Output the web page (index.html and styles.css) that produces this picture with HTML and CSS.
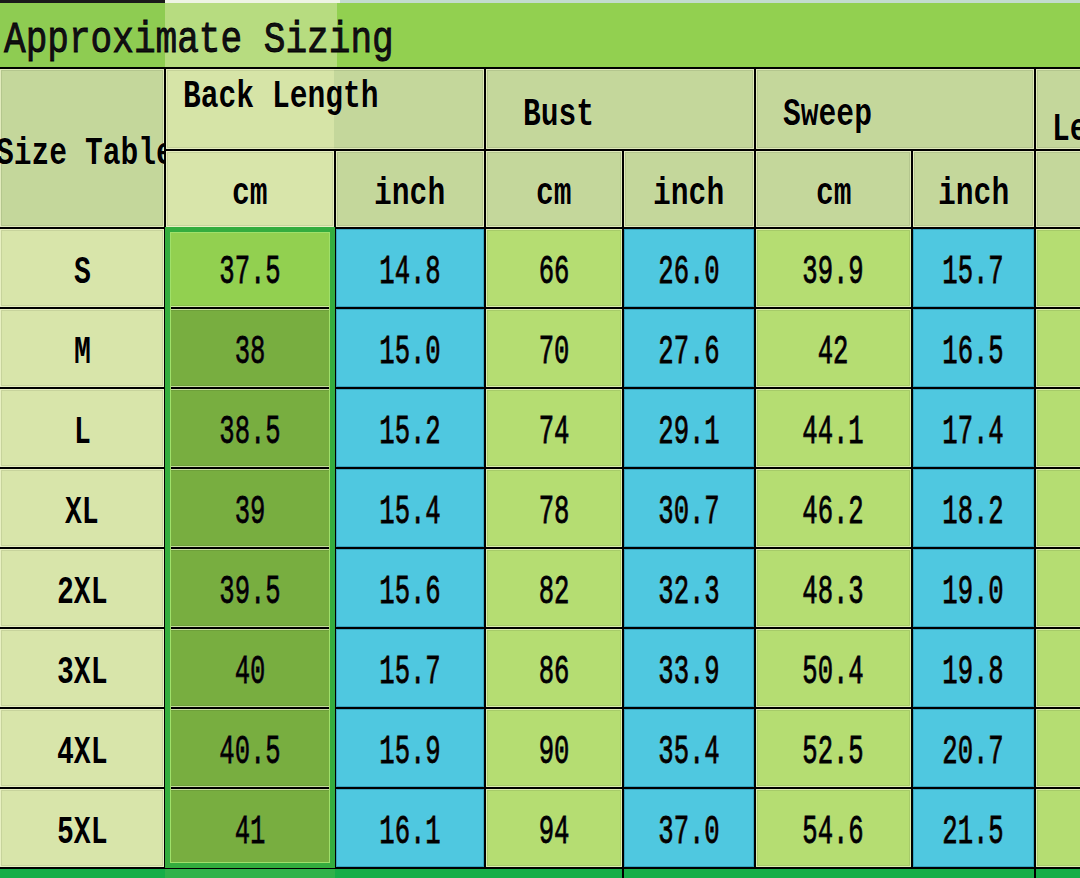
FILE: index.html
```html
<!DOCTYPE html>
<html>
<head>
<meta charset="utf-8">
<link rel="stylesheet" href="styles.css">
</head>
<body>
<div class="page">
  <div class="topstrip"></div>
  <div class="titlebar"><span class="t title">Approximate Sizing</span></div>
  <div class="sheet">
    <div class="c hd sizetable"><span class="t h left">Size Table</span></div>
    <div class="c hd grp backlen"><span class="t h left">Back Length</span></div>
    <div class="c hd grp bust"><span class="t h left">Bust</span></div>
    <div class="c hd grp sweep"><span class="t h left">Sweep</span></div>
    <div class="c hd le"><span class="t h left">Le</span></div>

    <div class="c lt"><span class="t h">cm</span></div>
    <div class="c hd"><span class="t h">inch</span></div>
    <div class="c hd"><span class="t h">cm</span></div>
    <div class="c hd"><span class="t h">inch</span></div>
    <div class="c hd"><span class="t h">cm</span></div>
    <div class="c hd"><span class="t h">inch</span></div>
    <div class="c hd"></div>

    <div class="c sz"><span class="t s">S</span></div>
    <div class="c ds"><span class="t n">37.5</span></div>
    <div class="c b"><span class="t n">14.8</span></div>
    <div class="c g"><span class="t n">66</span></div>
    <div class="c b"><span class="t n">26.0</span></div>
    <div class="c g"><span class="t n">39.9</span></div>
    <div class="c b"><span class="t n">15.7</span></div>
    <div class="c g"></div>

    <div class="c sz"><span class="t s">M</span></div>
    <div class="c dk"><span class="t n">38</span></div>
    <div class="c b"><span class="t n">15.0</span></div>
    <div class="c g"><span class="t n">70</span></div>
    <div class="c b"><span class="t n">27.6</span></div>
    <div class="c g"><span class="t n">42</span></div>
    <div class="c b"><span class="t n">16.5</span></div>
    <div class="c g"></div>

    <div class="c sz"><span class="t s">L</span></div>
    <div class="c dk"><span class="t n">38.5</span></div>
    <div class="c b"><span class="t n">15.2</span></div>
    <div class="c g"><span class="t n">74</span></div>
    <div class="c b"><span class="t n">29.1</span></div>
    <div class="c g"><span class="t n">44.1</span></div>
    <div class="c b"><span class="t n">17.4</span></div>
    <div class="c g"></div>

    <div class="c sz"><span class="t s">XL</span></div>
    <div class="c dk"><span class="t n">39</span></div>
    <div class="c b"><span class="t n">15.4</span></div>
    <div class="c g"><span class="t n">78</span></div>
    <div class="c b"><span class="t n">30.7</span></div>
    <div class="c g"><span class="t n">46.2</span></div>
    <div class="c b"><span class="t n">18.2</span></div>
    <div class="c g"></div>

    <div class="c sz"><span class="t s">2XL</span></div>
    <div class="c dk"><span class="t n">39.5</span></div>
    <div class="c b"><span class="t n">15.6</span></div>
    <div class="c g"><span class="t n">82</span></div>
    <div class="c b"><span class="t n">32.3</span></div>
    <div class="c g"><span class="t n">48.3</span></div>
    <div class="c b"><span class="t n">19.0</span></div>
    <div class="c g"></div>

    <div class="c sz"><span class="t s">3XL</span></div>
    <div class="c dk"><span class="t n">40</span></div>
    <div class="c b"><span class="t n">15.7</span></div>
    <div class="c g"><span class="t n">86</span></div>
    <div class="c b"><span class="t n">33.9</span></div>
    <div class="c g"><span class="t n">50.4</span></div>
    <div class="c b"><span class="t n">19.8</span></div>
    <div class="c g"></div>

    <div class="c sz"><span class="t s">4XL</span></div>
    <div class="c dk"><span class="t n">40.5</span></div>
    <div class="c b"><span class="t n">15.9</span></div>
    <div class="c g"><span class="t n">90</span></div>
    <div class="c b"><span class="t n">35.4</span></div>
    <div class="c g"><span class="t n">52.5</span></div>
    <div class="c b"><span class="t n">20.7</span></div>
    <div class="c g"></div>

    <div class="c sz"><span class="t s">5XL</span></div>
    <div class="c dk"><span class="t n">41</span></div>
    <div class="c b"><span class="t n">16.1</span></div>
    <div class="c g"><span class="t n">94</span></div>
    <div class="c b"><span class="t n">37.0</span></div>
    <div class="c g"><span class="t n">54.6</span></div>
    <div class="c b"><span class="t n">21.5</span></div>
    <div class="c g"></div>

    <div class="selection"></div>
  </div>
  <div class="bottomstrip"></div>
</div>
</body>
</html>
```

FILE: styles.css
```css
html, body {
  margin: 0;
  padding: 0;
  background: #000;
}
body {
  width: 1080px;
  height: 878px;
  overflow: hidden;
}
.page {
  width: 1080px;
  overflow: hidden;
  font-family: "Liberation Mono", "Courier New", monospace;
  color: #000;
}
.topstrip {
  height: 3px;
  background: linear-gradient(to right, #1a1a1a 0 165px, #eef4e4 165px 340px, #c3dccf 340px);
}
.titlebar {
  height: 64px;
  display: flex;
  align-items: center;
  padding-left: 4px;
  padding-top: 2px;
  box-sizing: border-box;
  background: linear-gradient(to right, #8ecc52 0 165px, #b7dc80 165px 337px, #92d050 337px);
}
.t {
  display: inline-block;
  white-space: nowrap;
  line-height: 1;
  text-shadow: 0 0 1px rgba(255, 255, 230, 0.9);
}
.title {
  font-size: 44px;
  transform: translateY(4px) scaleX(0.82);
  transform-origin: left center;
  -webkit-text-stroke: 0.9px #000;
  color: #111;
}
.sheet {
  position: relative;
  display: grid;
  grid-template-columns: 164px 168px 148px 136px 130px 155px 121px 80px;
  grid-template-rows: 80px 76px repeat(8, 78px);
  gap: 2px;
  background: #000;
  border-top: 2px solid #000;
  border-bottom: 2px solid #000;
  width: max-content;
}
.c {
  display: flex;
  align-items: center;
  justify-content: center;
  overflow: hidden;
  box-shadow: inset 0 0 0 1px rgba(250, 255, 215, 0.65), inset 0 0 0 2px rgba(0, 0, 0, 0.08);
}
.hd { background: #c4d79b; }
.lt { background: #d8e5aa; }
.sz { background: #d8e5aa; }
.g { background: #b5dd72; }
.b { background: #4fc8e0; box-shadow: inset 0 0 0 1px rgba(40, 140, 170, 0.6); }
.ds { background: #92d050; }
.dk { background: #78ae40; }

.h {
  font-size: 38px;
  font-weight: bold;
  transform: translateY(5px) scaleX(0.78);
}
.left { transform-origin: left center; }
.s {
  font-size: 38px;
  font-weight: bold;
  transform: translateY(5px) scaleX(0.74);
}
.n {
  font-size: 40px;
  transform: translateY(5px) scaleX(0.64);
  -webkit-text-stroke: 0.9px #000;
}

.sizetable {
  grid-row: 1 / 3;
  justify-content: flex-start;
  padding-top: 2px;
}
.sizetable .t { margin-left: -4px; }
.grp { grid-column: span 2; justify-content: flex-start; }
.backlen {
  align-items: flex-start;
  padding: 4px 0 0 17px;
  background: linear-gradient(to right, #d6e4a7 0 168px, #c4d79b 168px);
}
.bust { padding: 2px 0 0 37px; }
.sweep { padding: 2px 0 0 27px; }
.le {
  justify-content: flex-start;
  align-items: flex-end;
  padding: 0 0 0 16px;
}
.le .t { transform: translateY(0) scaleX(0.78); }

.selection {
  position: absolute;
  grid-column: 2 / 3;
  grid-row: 3 / 11;
  top: -2px;
  left: -1px;
  right: -1px;
  bottom: -1px;
  border: 5px solid #34ad3e;
  box-shadow: inset 0 0 0 1px #9fe06a;
  pointer-events: none;
}
.bottomstrip {
  height: 9px;
  background: linear-gradient(to right, #15ae48 0 165px, #2fb24a 165px 335px, #15ae48 335px 622px, #000 622px 624px, #15ae48 624px 1034px, #000 1034px 1036px, #15ae48 1036px);
}
```
